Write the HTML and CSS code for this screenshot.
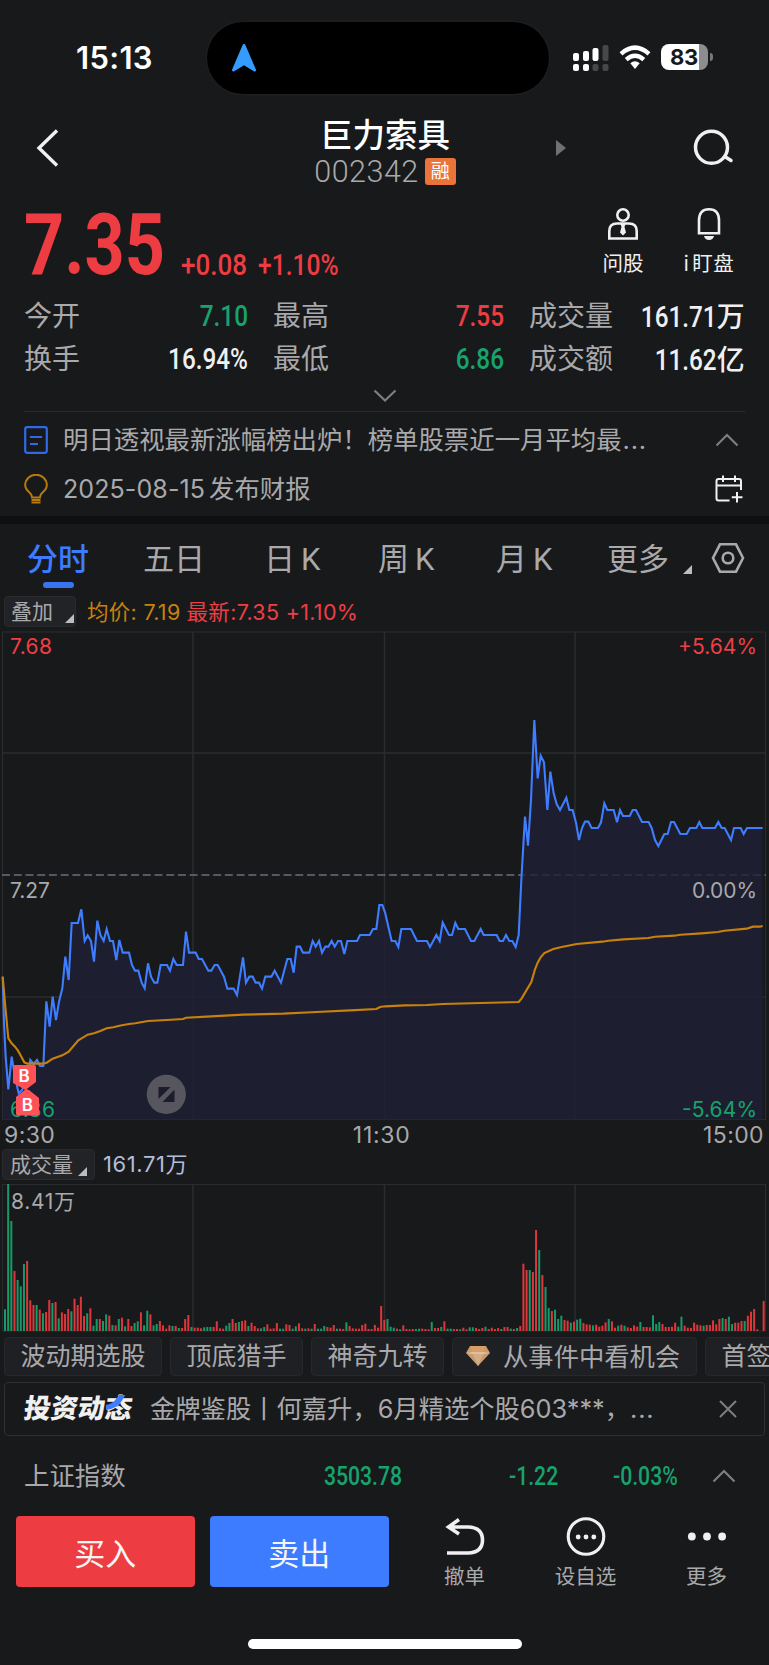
FILE: index.html
```html
<!DOCTYPE html>
<html lang="zh-CN">
<head>
<meta charset="utf-8">
<title>巨力索具 002342</title>
<link rel="stylesheet" href="styles.css">
</head>
<body>
<header class="status">
  <span class="clock">15:13</span>
  <div class="island"><svg width="26" height="30" viewBox="0 0 26 30"><path d="M13 3.5 L23.5 28 L13 21.5 L2.500 28 Z" fill="#359bff" stroke="#359bff" stroke-width="3" stroke-linejoin="round"/></svg></div>
  <svg class="signal" width="36" height="27" viewBox="0 0 36 27">
    <g fill="#fff"><rect x="0" y="8" width="6" height="8" rx="2"/><rect x="10" y="6" width="6" height="10" rx="2"/><rect x="19.500" y="3" width="6" height="13" rx="2"/><rect x="0" y="19" width="6" height="7" rx="2"/><rect x="10" y="19" width="6" height="7" rx="2"/></g>
    <g fill="#47484a"><rect x="29.500" y="0" width="6" height="16" rx="2"/><rect x="19.500" y="19" width="6" height="7" rx="2"/><rect x="29.500" y="19" width="6" height="7" rx="2"/></g>
  </svg>
  <svg class="wifi" width="32" height="25" viewBox="0 0 32 25">
    <g fill="none" stroke="#fff" stroke-width="4.400"><path d="M2 8.800 Q16 -3.500 30 8.800"/><path d="M7.200 14.600 Q16 7 24.800 14.600"/></g>
    <path d="M11.300 18.200 Q16 14.200 20.700 18.200 L16 24 Z" fill="#fff"/>
  </svg>
  <div class="battery"><span>83</span></div><i class="nub"></i>
</header>

<nav class="head">
  <svg class="back" width="24" height="40" viewBox="0 0 24 40"><path d="M21 2.500 L3 20 L21 37.500" fill="none" stroke="#f0f0f0" stroke-width="3.400"/></svg>
  <div class="title">
    <h1>巨力索具</h1>
    <p><span>002342</span><b>融</b></p>
  </div>
  <i class="next"></i>
  <svg class="search" width="42" height="42" viewBox="0 0 42 42"><g fill="none" stroke="#f0f0f0" stroke-width="3.500" stroke-linecap="round"><circle cx="18.500" cy="20.300" r="16"/><path d="M32.500 30 L38 33.500"/></g></svg>
</nav>

<section class="quote">
  <strong class="price">7.35</strong>
  <span class="chg c1">+0.08</span><span class="chg c2">+1.10%</span>
  <div class="tool ask">
    <svg width="32" height="34" viewBox="0 0 32 34"><g fill="none" stroke="#f0f0f0" stroke-width="2.600"><circle cx="16" cy="8" r="5.700"/><path d="M2.300 31.500 V24 Q2.300 16.500 10 16.500 H22 Q29.700 16.500 29.700 24 V31.500 Z"/></g><path d="M13.500 17 H18.500 L17.500 20 L19 25.500 L16 28.500 L13 25.500 L14.500 20 Z" fill="#f0f0f0"/></svg>
    <span>问股</span>
  </div>
  <div class="tool bell">
    <svg width="28" height="34" viewBox="0 0 28 34"><path d="M4 26 V13.500 Q4 2.300 14 2.300 Q24 2.300 24 13.500 V26 M2.700 26.300 H25.300" fill="none" stroke="#f0f0f0" stroke-width="2.600"/><path d="M9 29 H19 Q18 33 14 33 Q10 33 9 29 Z" fill="#f0f0f0"/></svg>
    <span><u>i</u>盯盘</span>
  </div>
</section>

<section class="stats">
  <dl>
    <dt>今开</dt><dd class="down">7.10</dd><dt>最高</dt><dd class="up">7.55</dd><dt>成交量</dt><dd>161.71<em>万</em></dd>
    <dt>换手</dt><dd>16.94%</dd><dt>最低</dt><dd class="down">6.86</dd><dt>成交额</dt><dd>11.62<em>亿</em></dd>
  </dl>
  <svg class="fold" width="24" height="14" viewBox="0 0 24 14"><path d="M1.500 1.500 L12 11.500 L22.500 1.500" fill="none" stroke="#7e7e80" stroke-width="2.200"/></svg>
</section>

<section class="notices">
  <div class="notice">
    <svg width="24" height="28" viewBox="0 0 24 28"><rect x="1.200" y="1.200" width="21.600" height="25.600" rx="2" fill="none" stroke="#2e6ae8" stroke-width="2.200"/><path d="M6 11 H18 M6 18 H14" stroke="#2e6ae8" stroke-width="2"/></svg>
    <span>明日透视最新涨幅榜出炉！榜单股票近一月平均最<i>...</i></span>
    <svg class="end up-arrow" width="24" height="14" viewBox="0 0 24 14"><path d="M1.500 12.500 L12 2 L22.500 12.500" fill="none" stroke="#7e7e80" stroke-width="2.200"/></svg>
  </div>
  <div class="notice">
    <svg width="24" height="30" viewBox="0 0 24 30"><path d="M8 23.500 Q8 20.500 4.500 17.500 Q1.200 15 1.200 11 A10.800 10.300 0 0 1 22.800 11 Q22.800 15 19.500 17.500 Q16 20.500 16 23.500 Z M7.500 26 H16.500 M7.500 28.500 H16.500" fill="none" stroke="#b87b0c" stroke-width="1.900"/></svg>
    <span><b>2025-08-15</b>发布财报</span>
    <svg class="end" width="28" height="28" viewBox="0 0 28 28"><path d="M26 15 V6 Q26 4 24 4 H3.500 Q1.500 4 1.500 6 V23.500 Q1.500 25.500 3.500 25.500 H14.500 M1.500 10.500 H26 M8 0.500 V7 M20 0.500 V7 M22 17 V27.500 M16.800 22.200 H27.500" fill="none" stroke="#f0f0f0" stroke-width="2"/></svg>
  </div>
</section>

<nav class="tabs">
  <a class="on">分时</a><a>五日</a><a>日<b>K</b></a><a>周<b>K</b></a><a>月<b>K</b></a><a>更多</a><i class="corner"></i>
  <svg width="34" height="32" viewBox="0 0 34 32"><g fill="none" stroke="#a9a9ab" stroke-width="2.600"><path d="M9 2.300 H25 L32 16 L25 29.700 H9 L2 16 Z"/><circle cx="17" cy="16" r="5.300"/></g></svg>
</nav>

<div class="legend">
  <span class="pick">叠加<i class="corner"></i></span>
  <span class="avg">均价: 7.19</span><span class="last">最新:7.35 +1.10%</span>
</div>

<svg class="chart" width="769" height="490" viewBox="0 0 769 490">
  <g stroke="#2b2c2f" stroke-width="1.500" fill="none">
    <rect x="2.500" y="1" width="763" height="487.500" stroke-width="1"/>
    <path d="M3 122 H765 M3 366 H765 M193 1 V488 M384.500 1 V488 M575 1 V488"/>
  </g>
  <path d="M2 244 H766" stroke="#6a6f80" stroke-width="1.500" stroke-dasharray="8 3.730"/>
  <polygon id="area" fill="#1f1f34" fill-opacity=".8"/>
  <g class="axis">
    <text x="10" y="22.500" textLength="42" fill="#ee3f45">7.68</text>
    <text x="678" y="22.500" textLength="79" fill="#ee3f45">+5.64%</text>
    <text x="10" y="267" textLength="40" fill="#a9a9ab">7.27</text>
    <text x="692" y="267" textLength="65" fill="#a9a9ab">0.00%</text>
    <text x="10" y="485.500" textLength="45" fill="#17a36d">6.86</text>
    <text x="682" y="485.500" textLength="75" fill="#17a36d">-5.64%</text>
  </g>
  <polyline id="price" fill="none" stroke="#3f7dff" stroke-width="2.100"/>
  <polyline id="average" fill="none" stroke="#c8820b" stroke-width="2.100"/>
  <g fill="#ff5258">
    <path d="M15 434 H34 Q36 434 36 436 V451 L28 457 L25.500 459 L13 452 V436 Q13 434 15 434 Z"/>
    <path d="M18 484.500 H37 Q39 484.500 39 482.500 V467 L29 459 L26 458 L16 466 V482.500 Q16 484.500 18 484.500 Z"/>
  </g>
  <g class="pin"><text x="24" y="450.500">B</text><text x="27.300" y="479.500">B</text></g>
  <circle cx="166.300" cy="463.300" r="19.600" fill="#57565f"/>
  <path d="M158.500 456 H170.500 L158.500 468 Z M174.500 458.500 V471 H162.500 Z" fill="#1b1c2c"/>
</svg>

<div class="times"><span>9:30</span><span>11:30</span><span>15:00</span></div>
<div class="legend vol">
  <span class="pick">成交量<i class="corner"></i></span><span class="amount">161.71万</span>
</div>
<svg class="volume" width="769" height="150" viewBox="0 0 769 150">
  <g stroke="#2b2c2f" stroke-width="1.500" fill="none">
    <rect x="2.500" y="1.500" width="763" height="146.500" stroke-width="1"/><path d="M193 2 V148 M384.500 2 V148 M575 2 V148"/>
  </g>
  <g id="bars"></g>
  <text x="11" y="25.500" textLength="64">8.41万</text>
</svg>

<div class="chips">
  <span>波动期选股</span><span>顶底猎手</span><span>神奇九转</span>
  <span class="gem"><svg width="24" height="22" viewBox="0 0 24 22"><path d="M4 1 H20 L24 8 L12 21 L0 8 Z" fill="#c99a6c"/><path d="M4 1 H20 L17 7 H7 Z" fill="#d99e65"/><path d="M0 8 L7 7 H17 L24 8 L12 10 Z" fill="#dfc09c"/><path d="M7 9 L12 21 L17 9 Z" fill="#d2ae87"/></svg>从事件中看机会</span>
  <span>首签</span>
</div>

<div class="banner">
  <strong>投资动态<svg width="20" height="17" viewBox="0 0 20 17"><path d="M0 10 Q7 9 11 3 L13.500 0 H19.500 L16 6 Q11 14 0 15 Z" fill="#3d7bff"/></svg></strong>
  <span>金牌鉴股丨何嘉升，6月精选个股603***，<i>...</i></span>
  <svg class="close" width="20" height="20" viewBox="0 0 20 20"><path d="M2 2 L18 18 M18 2 L2 18" stroke="#7e7e80" stroke-width="2"/></svg>
</div>

<div class="index">
  <span>上证指数</span><b class="i1">3503.78</b><b class="i2">-1.22</b><b class="i3">-0.03%</b>
  <svg width="24" height="14" viewBox="0 0 24 14"><path d="M1.500 12.500 L12 2 L22.500 12.500" fill="none" stroke="#7e7e80" stroke-width="2.200"/></svg>
</div>

<footer class="actions">
  <button class="buy">买入</button><button class="sell">卖出</button>
  <div class="act"><svg width="42" height="40" viewBox="0 0 42 40"><path d="M15 3 L4.500 10.500 L15 17.500 M5 10.500 H24 Q38.500 11 38.500 23.500 Q38.500 36 24 36.500 H3" fill="none" stroke="#f0f0f0" stroke-width="3.600"/></svg><span>撤单</span></div>
  <div class="act"><svg width="42" height="42" viewBox="0 0 42 42"><circle cx="21" cy="21" r="18.200" fill="none" stroke="#f0f0f0" stroke-width="3.200"/><g fill="#f0f0f0"><circle cx="13" cy="21.500" r="2.500"/><circle cx="21" cy="21.500" r="2.500"/><circle cx="29" cy="21.500" r="2.500"/></g></svg><span>设自选</span></div>
  <div class="act"><svg width="42" height="42" viewBox="0 0 42 42"><g fill="#f0f0f0"><circle cx="5.500" cy="21" r="4"/><circle cx="21" cy="21" r="4"/><circle cx="36.500" cy="21" r="4"/></g></svg><span>更多</span></div>
</footer>
<div class="home"></div>
<script src="chart.js"></script>
</body>
</html>
```
FILE: styles.css
```css
* { box-sizing: border-box; }
body { margin: 0; width: 769px; height: 1665px; overflow: hidden; background: #18191b; color: #f0f0f0; font-family: Inter, "Noto Sans CJK SC", sans-serif; line-height: 1; }
svg { display: block; flex: none; }
span, b, strong, i, em { white-space: nowrap; font-style: normal; }
p, h1, dl, dd { margin: 0; }

.status { display: flex; height: 100px; padding-top: 22px; align-items: flex-start; }
.clock { width: 131px; margin: 20px 0 0 76px; font-size: 31px; line-height: 32px; font-weight: 600; letter-spacing: .3px; color: #fff; }
.island { width: 342px; height: 72px; border-radius: 36px; background: #000; padding: 20px 24px; box-shadow: 0 0 0 1.500px #1d1e20; }
.signal { margin: 22.500px 0 0 24px; }
.wifi { margin: 23px 0 0 10px; }
.battery { margin: 22px 0 0 10px; width: 47px; height: 26px; border-radius: 8px; background: linear-gradient(90deg, #fff 38px, #8d8d90 38px); display: flex; justify-content: center; }
.battery span { font-size: 22px; line-height: 26px; font-weight: 700; color: #18191b; letter-spacing: -.3px; margin-right: 1px; }
.nub { width: 3px; height: 8px; margin: 31px 0 0 1.500px; border-radius: 0 4px 4px 0; background: #77787a; }

.head { display: flex; height: 96px; align-items: flex-start; }
.back { margin: 28px 0 0 36px; }
.title { width: 170px; margin: 15px 0 0 240px; text-align: center; }
.title h1 { font-size: 32.500px; line-height: 42px; font-weight: 500; color: #fff; }
.title p { display: flex; height: 31px; align-items: center; justify-content: center; gap: 6px; margin-top: -1px; }
.title p span { font: 300 30.500px/31px Roboto; letter-spacing: .5px; color: #a9a9ab; }
.title p b { width: 31px; height: 27px; border-radius: 3px; background: #ea733a; color: #fff; font-size: 19px; line-height: 27px; font-weight: 400; text-align: center; }
.next { margin: 40px 0 0 86px; border: solid transparent; border-width: 8px 0 8px 10px; border-left-color: #707173; }
.search { margin: 27px 0 0 127px; }

.quote { display: flex; height: 94px; align-items: flex-start; }
.price { width: 157px; margin: 1px 0 0 24px; font: 700 86px/96px Roboto; color: #ee3d42; transform: scaleX(.815); transform-origin: 0 0; }
.chg { font: 500 29.500px/40px Roboto; margin-top: 49px; color: #ee3d42; transform: scaleX(.88); transform-origin: 0 0; }
.c1 { width: 77px; }
.c2 { width: 342px; transform: scaleX(.835); }
.tool { display: flex; flex-direction: column; align-items: center; width: 46px; margin-top: 11px; }
.tool span { margin-top: 11px; font-size: 20.500px; line-height: 24px; }
.bell { width: 54px; margin-left: 36px; }
.bell span { letter-spacing: .5px; }
.bell u { margin-right: 3px; text-decoration: none; }

.stats { height: 121px; padding: 4px 24px 0; }
.stats dl { display: grid; grid-template-columns: 90px 134px 90px 166px 100px 141px; grid-auto-rows: 43px; align-items: center; }
.stats dt { font-size: 28px; line-height: 42px; color: #a9a9ab; white-space: nowrap; }
.stats dt:nth-of-type(3n+2) { padding-left: 25px; }
.stats dt:nth-of-type(3n) { padding-left: 25px; }
.stats dd { font: 500 30px/42px Roboto; text-align: right; transform: scaleX(.81); transform-origin: 100% 50%; white-space: nowrap; }
.stats dd em { display: inline-block; width: 35px; font: 500 28px/42px "Noto Sans CJK SC"; text-align: left; transform: scaleX(1.23); transform-origin: 0 50%; }
.up { color: #ee3d42; }
.down { color: #17a36d; }
.fold { margin: 9px auto 0; }

.notices { height: 105px; margin: 0 24px; border-top: 1px solid #2b2c2f; padding-top: 3px; }
.notice { display: flex; height: 49px; align-items: center; }
.notice span { margin-left: 15px; font-size: 25.400px; line-height: 48px; color: #a9a9ab; }
.notice i { letter-spacing: .8px; margin-left: 1px; }
.notice b { display: inline-block; width: 146px; font: 400 25px/48px Inter; letter-spacing: .1px; }
.notice .end { margin-left: auto; margin-right: 2px; }
.notice .up-arrow { margin-right: 6px; }

.tabs { display: flex; height: 78px; border-top: 8px solid #0f1012; padding-left: 27px; align-items: flex-start; }
.tabs a { position: relative; width: 116px; margin-top: 13px; font-size: 31px; line-height: 44px; color: #a9a9ab; }
.tabs a:nth-child(2) { width: 121px; }
.tabs a:nth-child(3) { width: 114px; }
.tabs a:nth-child(4) { width: 118px; }
.tabs a:nth-child(5) { width: 111px; }
.tabs a:nth-child(6) { width: 76px; }
.tabs b { font: 400 31px/44px Roboto; margin-left: 6px; }
.tabs .on { color: #3d7bff; font-weight: 500; }
.tabs .on::after { content: ""; position: absolute; left: 16px; top: 45px; width: 31px; height: 6px; border-radius: 3px; background: #3874f0; }
.corner { border: solid transparent; border-width: 0 0 9px 9px; border-bottom-color: #bdbdbf; }
.tabs .corner { margin-top: 41px; }
.tabs svg { margin: 18px 0 0 19px; }

.legend { display: flex; height: 37px; align-items: flex-start; font-size: 21px; padding-left: 4px; }
.pick { display: flex; align-items: center; width: 72px; height: 31px; margin-top: 2px; padding-left: 6px; border-radius: 4px; background: #222326; border: 1px solid #292a2d; color: #a9a9ab; line-height: 30px; }
.pick .corner { margin: 13px 0 0 12px; }
.avg { margin: -1px 0 0 11px; font-size: 21.500px; line-height: 38px; color: #c8820b; letter-spacing: .3px; }
.last { margin: -1px 0 0 6px; font-size: 21.500px; line-height: 38px; color: #ee3f45; letter-spacing: .3px; }
.axis text { font: 400 21px Inter; }
.pin text { font: 600 17px Inter; fill: #fff; text-anchor: middle; }
.times { display: flex; justify-content: space-between; height: 26px; padding: 0 5px 0 4px; font-size: 23px; line-height: 28px; letter-spacing: .4px; color: #a9a9ab; }
.times span:nth-child(2) { margin-left: 5px; letter-spacing: .7px; }
.vol { height: 36px; padding-left: 2px; }
.vol .pick { width: 93px; padding-left: 7px; }
.vol .pick .corner { margin-left: 5px; }
.amount { margin: 0 0 0 8px; font-size: 22px; line-height: 34px; color: #b3bddb; letter-spacing: .6px; }
.volume text { font: 400 21px Inter, "Noto Sans CJK SC"; fill: #a9a9ab; }

.chips { display: flex; gap: 8px; height: 49px; padding: 4px 0 0 4px; overflow: hidden; }
.chips span { display: flex; align-items: center; flex: none; height: 39px; padding: 0 15.500px; border: 1px solid #27282b; border-radius: 4px; background: #1f2023; color: #a9a9ab; font-size: 25px; line-height: 37px; }
.chips .gem { width: 245px; padding: 0 0 0 13px; font-size: 25.300px; }
.gem svg { margin: -2px 13px 0 0; }

.banner { display: flex; align-items: center; height: 54px; margin: 0 4px; padding-left: 19px; border: 1px solid #2f3033; border-radius: 4px; }
.banner strong { position: relative; width: 109px; font-size: 27px; line-height: 50px; font-weight: 900; transform: skewX(-8deg); }
.banner strong svg { position: absolute; left: 81px; top: 11px; transform: skewX(8deg); }
.banner span { width: 568px; margin-left: 17px; font-size: 25.300px; line-height: 50px; color: #a9a9ab; }
.banner i { letter-spacing: .8px; }

.index { display: flex; align-items: center; height: 80px; padding-left: 24px; color: #a9a9ab; font-size: 25.400px; }
.index b { font: 500 25.500px/40px Roboto; color: #17a36d; transform: scaleX(.83); transform-origin: 0 50%; }
.i1 { width: 185px; margin-left: 198px; }
.i2 { width: 104px; }
.i3 { width: 99px; }

.actions { display: flex; height: 123px; padding-left: 16px; align-items: flex-start; }
button { width: 178.500px; height: 71px; margin-right: 15.500px; padding: 0; border: 0; border-radius: 4px; color: #f5f5f5; font: 400 31px/70px "Noto Sans CJK SC"; }
.buy { background: #ee3d42; }
.sell { background: #3d7bff; }
.act { display: flex; flex-direction: column; align-items: center; justify-content: space-between; width: 121px; height: 74px; }
.act svg { height: 41px; }
.act span { font-size: 20.500px; line-height: 26px; color: #a9a9ab; }
.home { width: 274px; height: 10px; margin-left: 248px; border-radius: 5px; background: #fff; }
```
FILE: chart.js
```js
// Intraday series, stored as [x offset, y offset, "x,y ..."] in thirds of a pixel.
const priceParts = [
  [0, 249, "8,290 12,430 17,530 25,628 35,530 45,590 56,640 66,630 82,600 91,540 101,552 111,540 120,558 130,558 139,364 149,440 158,350 168,420 177,365 187,325 196,230 206,300 215,129 234,129 244,88 254,183 263,166 273,183 282,245 292,122 301,165 311,183 320,147 330,183 339,183 349,240 358,180 368,218 387,218 396,255 405,272 415,272 425,308 434,325 444,250 453,290 463,308 472,308 482,255 501,255 510,272 520,237 530,255 549,255 558,155 567,218 587,218 596,237 606,237 625,272 634,272 644,255 653,255 672,290 682,326 701,326 711,345 729,232 738,308 748,290 758,290 767,308 777,308 786,326 796,290 814,290 824,272 843,308 862,237 872,237 881,278 890,200 900,200 909,218 928,218 938,183 947,200 957,183 966,218 976,200 985,200 995,183 1004,200 1014,183 1023,183 1033,222 1042,183 1071,183 1080,165 1109,165 1119,147 1129,147 1138,75 1147,75"],
  [385, 249, "0,97 20,183 31,183 40,201 49,147 78,147 96,183 126,183 135,201 154,165 164,183 173,128 192,165 201,165 211,129 220,147 240,147 258,183 268,183 287,147 296,165 335,165 344,183 354,183 363,165 373,183 382,183 392,201 401,165 409,0"],
  [385, -11, "420,590 429,677 438,540 448,300 458,475 467,407 477,427 487,570 496,455 506,520 515,552 525,570 544,533 553,570 563,570 573,608 582,660 591,624 600,605 610,605 620,624 639,624 648,607 658,550 667,570 686,570 696,607 705,570 714,588 734,588 743,570 753,570 771,606 791,606 800,624 810,660 820,678 838,642 848,642 858,606 867,606 886,642 905,642 915,624 934,624 943,606 952,624 990,624 1000,606 1010,624 1019,624 1038,660 1047,624 1067,624 1076,642 1086,624 1133,624"]
];
const averageParts = [
  [0, 249, "8,290 15,370 25,475 35,490 45,500 54,512 64,530 73,547 82,551 130,551 140,548 158,536 187,526 206,515 235,481 263,464 282,460 301,453 320,445 340,442 358,437 387,432 406,430 444,423 500,420 549,417 558,413 620,410 730,404 850,401 950,396 1050,391 1129,387 1140,381 1155,379"],
  [385, 249, "60,376 126,375 173,372 401,366 410,355 439,306 450,268 458,248 467,232 478,219 505,207 530,201 575,192 652,185 670,182 715,178 790,174 810,170 868,167 886,164 950,160 998,156 1018,152 1085,146 1104,140 1124,140 1133,138"]
];
const toPoints = parts => parts.map(([dx, dy, s]) => s.split(" ").map(p => {
  const [x, y] = p.split(",").map(Number);
  return (dx + x / 3).toFixed(2) + "," + (dy + y / 3).toFixed(2);
}).join(" ")).join(" ");

const line = toPoints(priceParts);
document.getElementById("price").setAttribute("points", line);
document.getElementById("area").setAttribute("points", line + " 762.7,488.5 2.7,488.5");
document.getElementById("average").setAttribute("points", toPoints(averageParts));

// One bar a minute: g = falling, r = rising, then the height in thirds of a pixel.
const volume = "g65 g441 g330 r180 g153 g134 g201 r210 r92 r78 g78 r64 g53 r57 r93 g84 r87 g38 r56 r51 r66 g59 r97 r78 r103 r45 g53 r68 g16 g36 r36 g30 g50 r46 g18 r17 g36 r40 g14 r36 r15 g24 g29 r56 g17 g61 r50 g17 g21 r30 r17 r7 r17 g15 r15 g9 r9 r36 r48 g12 r10 r10 r8 g11 g12 g12 r12 r29 r8 r7 g16 g24 r36 r24 g27 r30 r32 g15 r25 r15 r8 g8 g12 r20 r7 r8 r24 g7 g7 r20 r18 g7 g14 r23 r8 g7 r8 g7 r21 g7 g7 g15 r12 r10 r18 g7 r7 r6 g26 r15 r8 r7 r7 r18 r22 r6 r6 r18 r10 r75 r33 g36 g13 g10 r7 g5 r17 r6 r5 r6 g6 g7 r7 r6 r5 g27 r9 r9 g12 r29 g7 g7 r6 r6 g5 r10 r5 g11 g11 r9 r6 r9 g13 r6 r10 r6 r9 g6 r12 r12 g7 r6 g9 r15 r202 r183 g183 r177 r303 g243 r168 g132 g69 r60 g64 g36 g46 r33 r31 g25 r28 g34 g37 r24 r20 r19 g17 r19 r13 r16 r26 g36 r29 r10 g16 r19 g16 r11 r9 r17 r13 g27 r12 r12 r11 g47 g21 g27 r21 r12 r12 r13 r25 g13 g43 r16 r10 r9 r25 r19 r17 g16 r18 r18 r32 r20 r36 g39 r36 g43 g21 r25 r25 r30 g30 r46 r58 r66 r5 r0 r90";
document.getElementById("bars").innerHTML = volume.split(" ").map((v, i) => {
  const h = v.slice(1) / 3;
  return `<rect x="${(4 + i * 3.161).toFixed(2)}" y="${(148 - h).toFixed(2)}" width="2" height="${h.toFixed(2)}" fill="${v[0] === "g" ? "#159a68" : "#de363b"}"/>`;
}).join("");
```
